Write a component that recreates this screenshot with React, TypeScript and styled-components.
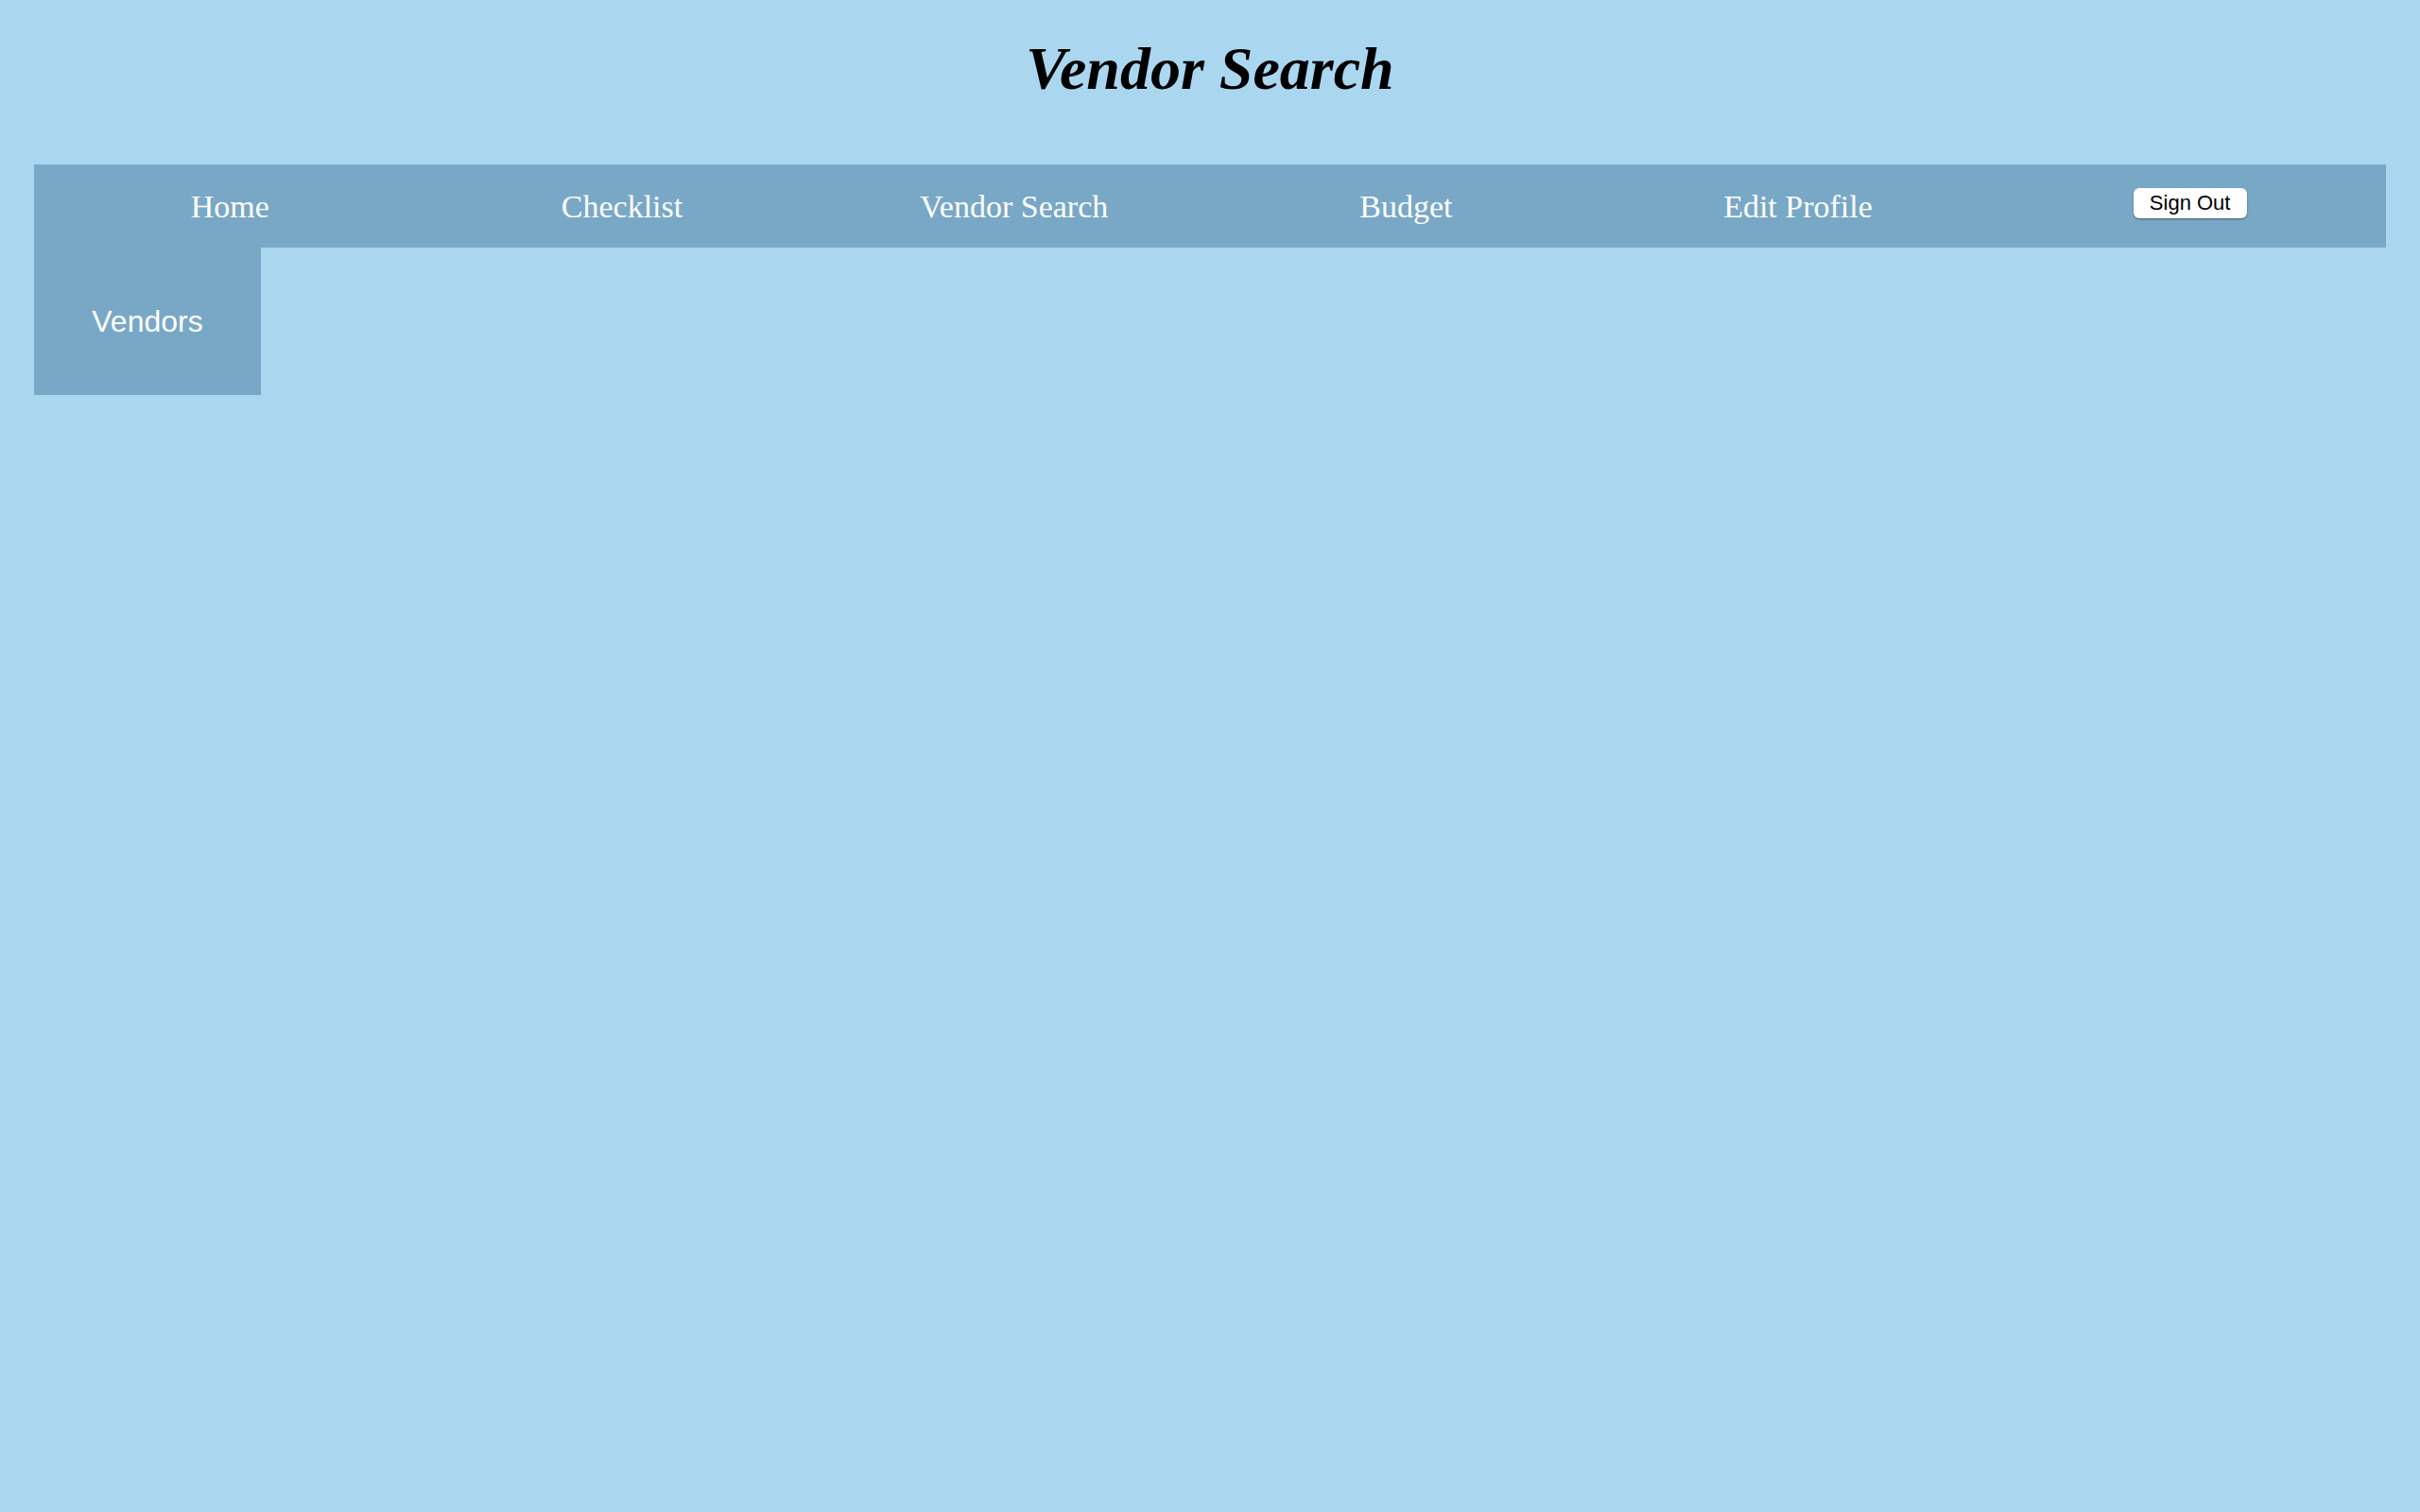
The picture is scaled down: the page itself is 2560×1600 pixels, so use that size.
import React from "react";
import styled, { createGlobalStyle } from "styled-components";

const GlobalStyle = createGlobalStyle`
  html, body {
    margin: 0;
    padding: 0;
    background: #aad6f0;
    min-height: 100%;
  }
  body {
    font-family: "Liberation Serif", "Times New Roman", serif;
  }
`;

const Page = styled.div`
  min-height: 1600px;
  background: #aad6f0;
  padding: 37px 36px 0;
  box-sizing: border-box;
`;

const Title = styled.h1`
  margin: 0 0 65px;
  text-align: center;
  font-family: "Liberation Serif", "Times New Roman", serif;
  font-weight: bold;
  font-style: italic;
  font-size: 64px;
  line-height: 72px;
  color: #000;
`;

const NavBar = styled.nav`
  display: grid;
  grid-template-columns: repeat(6, 1fr);
  align-items: center;
  height: 88px;
  background: #79a8c7;
`;

const NavLink = styled.a`
  justify-self: center;
  padding-top: 2px;
  font-family: "Liberation Serif", "Times New Roman", serif;
  font-size: 34px;
  color: #fff;
  text-decoration: none;
  cursor: pointer;
`;

const SignOutButton = styled.button`
  justify-self: center;
  margin-bottom: 6px;
  width: 120px;
  height: 32px;
  padding: 0;
  border: none;
  border-radius: 6px;
  background: #fff;
  box-shadow: 0 1px 2px rgba(0, 0, 0, 0.45);
  font-family: "Liberation Sans", Arial, sans-serif;
  font-size: 22px;
  color: #000;
  cursor: pointer;
`;

const Content = styled.div`
  display: flex;
`;

const SideBar = styled.aside`
  display: flex;
  align-items: center;
  justify-content: center;
  width: 240px;
  height: 156px;
  background: #79a8c7;
`;

const SideLink = styled.a`
  font-family: "Liberation Sans", Arial, sans-serif;
  font-size: 32px;
  color: #fff;
  text-decoration: none;
`;

const links = ["Home", "Checklist", "Vendor Search", "Budget", "Edit Profile"];

export default function App() {
  return (
    <>
      <GlobalStyle />
      <Page>
        <Title>Vendor Search</Title>
        <NavBar>
          {links.map((l) => (
            <NavLink key={l}>{l}</NavLink>
          ))}
          <SignOutButton>Sign Out</SignOutButton>
        </NavBar>
        <Content>
          <SideBar>
            <SideLink>Vendors</SideLink>
          </SideBar>
        </Content>
      </Page>
    </>
  );
}
